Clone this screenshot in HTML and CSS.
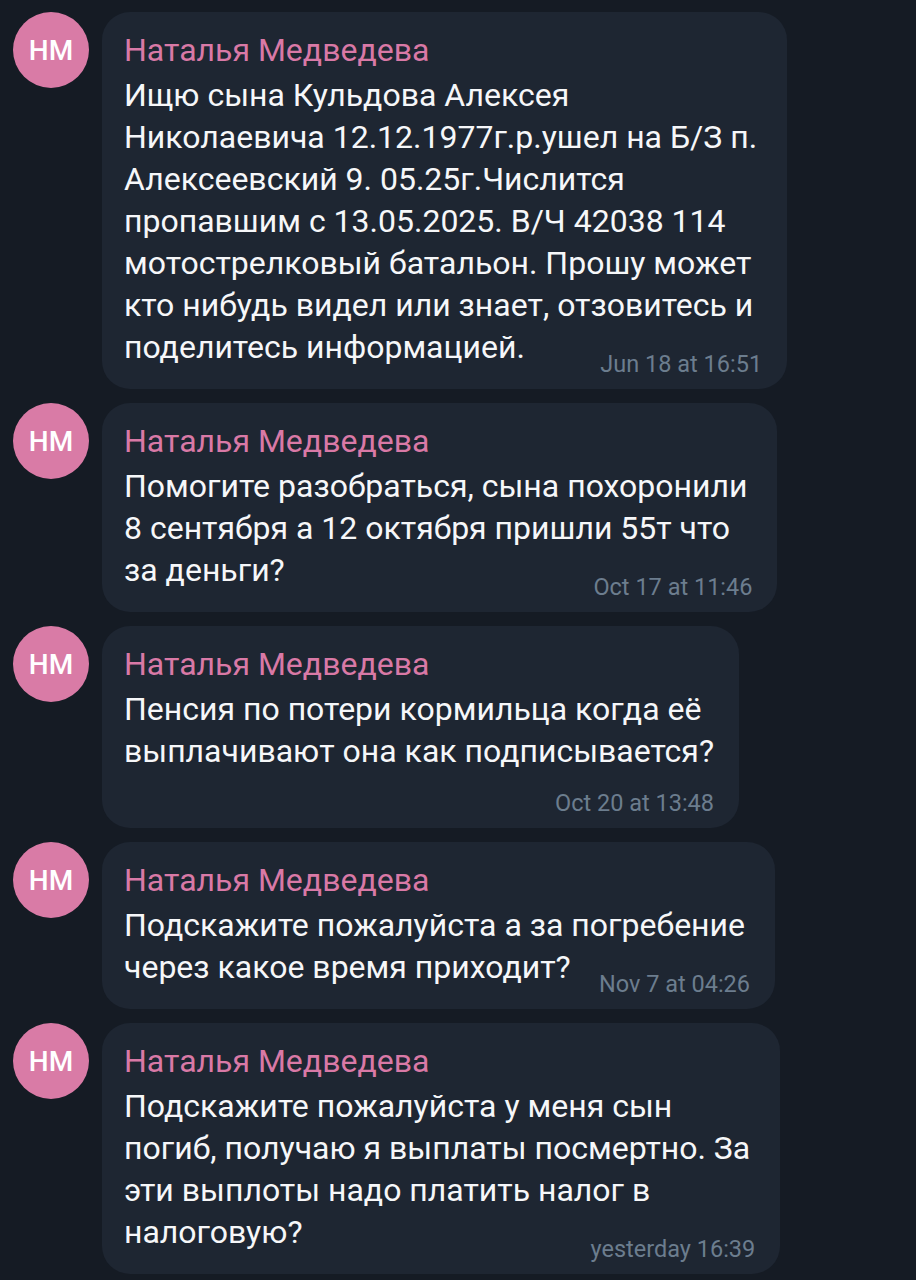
FILE: index.html
```html
<!DOCTYPE html>
<html lang="ru">
<head>
<meta charset="utf-8">
<link rel="stylesheet" href="styles.css">
</head>
<body>
<div class="chat">
  <div class="row">
    <div class="avatar">НМ</div>
    <div class="bubble">
      <div class="name">Наталья Медведева</div>
      <div class="text">Ищю сына Кульдова Алексея<br>Николаевича 12.12.1977г.р.ушел на Б/З п.<br>Алексеевский 9. 05.25г.Числится<br>пропавшим с 13.05.2025. В/Ч 42038 114<br>мотострелковый батальон. Прошу может<br>кто нибудь видел или знает, отзовитесь и<br>поделитесь информацией.<span class="time">Jun 18 at 16:51</span></div>
    </div>
  </div>
  <div class="row">
    <div class="avatar">НМ</div>
    <div class="bubble">
      <div class="name">Наталья Медведева</div>
      <div class="text">Помогите разобраться, сына похоронили<br>8 сентября а 12 октября пришли 55т что<br>за деньги?<span class="time">Oct 17 at 11:46</span></div>
    </div>
  </div>
  <div class="row">
    <div class="avatar">НМ</div>
    <div class="bubble compact">
      <div class="name">Наталья Медведева</div>
      <div class="text">Пенсия по потери кормильца когда её<br>выплачивают она как подписывается?</div>
      <div class="time time-below">Oct 20 at 13:48</div>
    </div>
  </div>
  <div class="row">
    <div class="avatar">НМ</div>
    <div class="bubble">
      <div class="name">Наталья Медведева</div>
      <div class="text">Подскажите пожалуйста а за погребение<br>через какое время приходит?<span class="time">Nov 7 at 04:26</span></div>
    </div>
  </div>
  <div class="row">
    <div class="avatar">НМ</div>
    <div class="bubble">
      <div class="name">Наталья Медведева</div>
      <div class="text">Подскажите пожалуйста у меня сын<br>погиб, получаю я выплаты посмертно. За<br>эти выплоты надо платить налог в<br>налоговую?<span class="time">yesterday 16:39</span></div>
    </div>
  </div>
</div>
</body>
</html>
```
FILE: styles.css
```css
html, body {
  margin: 0;
  padding: 0;
  background: #151b24;
}
body {
  font-family: Roboto, "Noto Sans", sans-serif;
  color: #f6f7f9;
  width: 916px;
  height: 1280px;
  overflow: hidden;
}
.chat {
  display: flex;
  flex-direction: column;
  gap: 14px;
  padding: 12px 100px 0 13px;
}
.row {
  display: flex;
  align-items: flex-start;
  gap: 13px;
}
.avatar {
  flex: none;
  width: 76px;
  height: 76px;
  border-radius: 50%;
  background: #d97ba6;
  color: #ffffff;
  font-weight: 500;
  font-size: 28px;
  display: flex;
  align-items: center;
  justify-content: center;
}
.bubble {
  background: #1e2632;
  border-radius: 28px;
  padding: 17px 25px 11px 22px;
  display: flow-root;
  min-width: 0;
}
.name {
  color: #d979a6;
  font-size: 32px;
  line-height: 42px;
}
.text {
  font-size: 32px;
  line-height: 42px;
  margin-top: 3px;
  padding-right: 5px;
  display: flow-root;
  white-space: nowrap;
}
.time {
  float: right;
  font-size: 23.5px;
  line-height: 28px;
  color: #6c7d8e;
  margin: 24px -5px 0 20px;
}
.compact .text {
  padding-right: 0;
}
.time-below {
  float: none;
  text-align: right;
  margin: 17px 0 0 0;
}
```
